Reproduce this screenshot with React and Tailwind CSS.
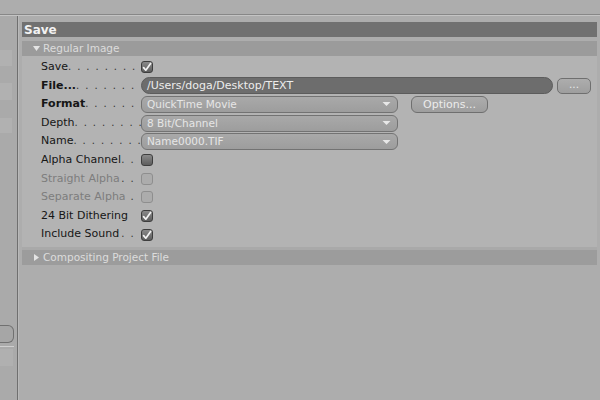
import React from "react";

const font = { fontFamily: '"DejaVu Sans", "Liberation Sans", sans-serif' };

function Check({ checked, disabled }) {
  if (disabled) {
    return <div className="w-[12px] h-[12px] rounded-[3px] border border-[#8e8e8e] bg-[#acacac]" />;
  }
  return (
    <div className="w-[12px] h-[12px] rounded-[3px] border border-[#3e3e3e] bg-gradient-to-b from-[#8a8a8a] to-[#5e5e5e] flex items-center justify-center">
      {checked && (
        <svg width="10" height="10" viewBox="0 0 10 10">
          <path d="M1.6 5.6 L3.8 8.2 L8.6 1.4" fill="none" stroke="#f4f4f4" strokeWidth="1.7" strokeLinecap="round" strokeLinejoin="round" />
        </svg>
      )}
    </div>
  );
}

function Label({ text, bold, disabled, dots }) {
  return (
    <div className={`w-[100px] pr-[6px] flex items-baseline justify-between whitespace-nowrap text-[11px] ${disabled ? "text-[#7d7d7d]" : "text-[#161616]"}`}>
      <span className={bold ? "font-bold" : ""}>{text}</span>
      {dots > 0 && (
        <span className="tracking-[1.4px] text-[#333] text-[10px]">{Array(dots).fill(".").join(" ")}</span>
      )}
    </div>
  );
}

function Dropdown({ text }) {
  return (
    <div className="w-[257px] h-[17px] rounded-[6px] border border-[#737373] bg-gradient-to-b from-[#a9a9a9] to-[#9d9d9d] flex items-center px-[5px] text-[#e6e6e6]">
      <span className="flex-1 leading-none">{text}</span>
      <svg width="9" height="6" viewBox="0 0 9 6" className="mr-[1px]">
        <path d="M0.5 1 L8.5 1 L4.5 5 Z" fill="#e8e8e8" />
      </svg>
    </div>
  );
}

function Row({ children }) {
  return <div className="h-[18.6px] flex items-center">{children}</div>;
}

export default function App() {
  return (
    <div className="w-[600px] h-[400px] bg-[#adadad] flex flex-col overflow-hidden text-[10.5px]" style={font}>
      <div className="h-[14px] bg-[#adadad]" />
      <div className="h-[1px] bg-[#878787]" />
      <div className="h-[1px] bg-[#c4c4c4]" />
      <div className="flex-1 flex">
        {/* left panel */}
        <div className="w-[17px] flex flex-col bg-[#aaaaaa]">
          <div className="h-[34px]" />
          <div className="h-[16px] w-[12px] bg-[#b1b1b1]" />
          <div className="h-[17px]" />
          <div className="h-[17px] w-[12px] bg-[#b1b1b1]" />
          <div className="h-[18px]" />
          <div className="h-[15px] w-[12px] bg-[#b1b1b1]" />
          <div className="h-[192px]" />
          <div className="h-[18px] w-[14px] rounded-r-[6px] border border-l-0 border-[#707070] bg-[#a6a6a6]" />
          <div className="h-[3px]" />
          <div className="h-[1px] w-[14px] bg-[#cfcfcf]" />
          <div className="h-[2px]" />
          <div className="h-[17px] w-[13px] bg-[#b0b0b0]" />
        </div>
        <div className="w-[1px] bg-[#6f6f6f]" />
        <div className="w-[1px] bg-[#b9b9b9]" />
        {/* main */}
        <div className="flex-1 flex flex-col pl-[3px] pt-[6px]">
          <div className="h-[15px] bg-[#717171] flex items-center pl-[2px] mr-[3px]">
            <span className="font-bold text-[12px] text-[#f2f2f2] leading-none">Save</span>
          </div>
          <div className="h-[4px]" />
          <div className="mr-[3px] bg-[#b3b3b3]">
            <div className="h-[15px] bg-[#9b9b9b] flex items-center pl-[11px] text-[#dcdcdc]">
              <svg width="7" height="5" viewBox="0 0 7 5" className="mr-[3px]">
                <path d="M0 0 L7 0 L3.5 5 Z" fill="#e4e4e4" />
              </svg>
              <span className="leading-none">Regular Image</span>
            </div>
            <div className="pl-[19px] pt-[2px] pb-[3px]">
              <Row>
                <Label text="Save" dots={8} />
                <Check checked />
              </Row>
              <Row>
                <Label text="File..." bold dots={7} />
                <div className="w-[412px] h-[17px] rounded-full bg-[#6d6d6d] border border-[#5c5c5c] flex items-center pl-[5px] text-[#ececec] text-[11px]">
                  /Users/doga/Desktop/TEXT
                </div>
                <div className="ml-[4px] w-[34px] h-[16px] rounded-[5px] border border-[#6f6f6f] bg-gradient-to-b from-[#adadad] to-[#9e9e9e] flex items-center justify-center text-[#e8e8e8] leading-none pb-[3px]">
                  ...
                </div>
              </Row>
              <Row>
                <Label text="Format" bold dots={7} />
                <Dropdown text="QuickTime Movie" />
                <div className="ml-[13px] w-[77px] h-[17px] rounded-[6px] border border-[#6f6f6f] bg-gradient-to-b from-[#adadad] to-[#9e9e9e] flex items-center justify-center text-[#ececec] text-[11px] leading-none">
                  Options...
                </div>
              </Row>
              <Row>
                <Label text="Depth" dots={8} />
                <Dropdown text="8 Bit/Channel" />
              </Row>
              <Row>
                <Label text="Name" dots={8} />
                <Dropdown text="Name0000.TIF" />
              </Row>
              <Row>
                <Label text="Alpha Channel" dots={2} />
                <Check />
              </Row>
              <Row>
                <Label text="Straight Alpha" disabled dots={2} />
                <Check disabled />
              </Row>
              <Row>
                <Label text="Separate Alpha" disabled dots={1} />
                <Check disabled />
              </Row>
              <Row>
                <Label text="24 Bit Dithering" dots={0} />
                <Check checked />
              </Row>
              <Row>
                <Label text="Include Sound" dots={2} />
                <Check checked />
              </Row>
            </div>
          </div>
          <div className="h-[3px] mr-[3px] bg-[#a9a9a9]" />
          <div className="h-[15px] mr-[3px] bg-[#9c9c9c] flex items-center pl-[12px] text-[#dcdcdc]">
            <svg width="5" height="7" viewBox="0 0 5 7" className="mr-[4px]">
              <path d="M0 0 L5 3.5 L0 7 Z" fill="#e4e4e4" />
            </svg>
            <span className="leading-none">Compositing Project File</span>
          </div>
        </div>
      </div>
    </div>
  );
}
